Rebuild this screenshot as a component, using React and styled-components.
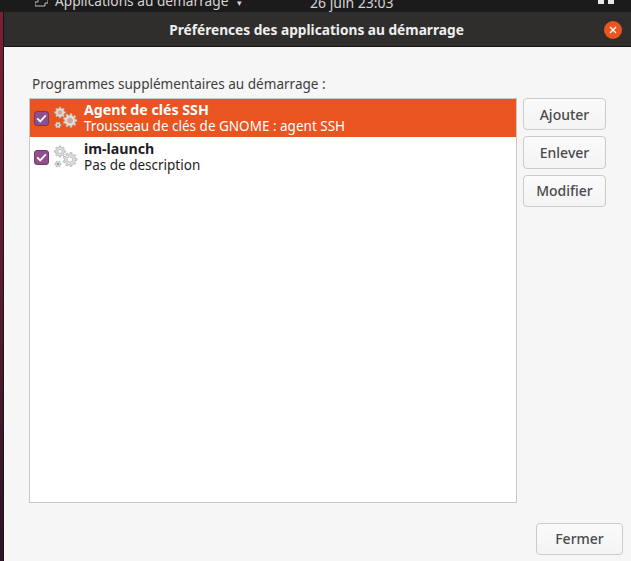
import React from "react";
import styled, { createGlobalStyle } from "styled-components";

const GlobalStyle = createGlobalStyle`
  html, body { margin: 0; padding: 0; background: #17151a; }
  body { font-family: "Noto Sans", "Open Sans", sans-serif; }
`;

const Screen = styled.div`
  width: 631px;
  height: 561px;
  display: flex;
  flex-direction: column;
  overflow: hidden;
`;

const TopBar = styled.div`
  height: 12px;
  flex: none;
  display: flex;
  align-items: flex-end;
  background: #1c1b1c;
  color: #d4d4d4;
  font-size: 13.7px;
  line-height: 18px;
  overflow: hidden;
  padding-left: 35px;
`;

const AppMenu = styled.div`
  display: flex;
  align-items: flex-end;
  gap: 7px;
  width: 275px;
  svg { margin-bottom: 5px; flex: none; }
`;

const Caret = styled.span`
  font-size: 9px;
  margin-left: 9px;
`;

const Clock = styled.div`
  width: 288px;
  font-size: 14px;
`;

const Tray = styled.div`
  display: flex;
  gap: 4px;
  margin-bottom: 8px;
  span { display: block; width: 6px; height: 4px; background: #e8e8e8; }
`;

const Desktop = styled.div`
  flex: 1;
  display: flex;
  min-height: 0;
`;

const WindowEdge = styled.div`
  width: 3px;
  flex: none;
  background: linear-gradient(#7a2133 0, #5e1b30 45%, #2a1426 100%);
  border-right: 1px solid #17151a;
`;

const Win = styled.div`
  flex: 1;
  display: flex;
  flex-direction: column;
  min-width: 0;
`;

const TitleBar = styled.header`
  height: 34px;
  flex: none;
  display: flex;
  align-items: center;
  justify-content: center;
  position: relative;
  background: #2f2e2d;
  border-bottom: 1px solid #161514;
  color: #efefef;
  font-size: 13.7px;
  font-weight: 700;
  padding-right: 2px;
`;

const CloseButton = styled.button`
  position: absolute;
  right: 9px;
  top: 9px;
  width: 18px;
  height: 18px;
  border: 0;
  border-radius: 50%;
  padding: 0;
  display: flex;
  align-items: center;
  justify-content: center;
  background: #e95420;
`;

const Body = styled.main`
  flex: 1;
  display: flex;
  flex-direction: column;
  background: #f6f6f6;
  padding: 28px 8px 6px 25px;
  min-height: 0;
`;

const Label = styled.div`
  font-size: 13.55px;
  line-height: 18px;
  color: #3d3d3d;
  margin: 0 0 5px 3px;
`;

const Columns = styled.div`
  display: flex;
  gap: 6px;
  flex: 1;
  min-height: 0;
`;

const List = styled.div`
  width: 488px;
  height: 405px;
  box-sizing: border-box;
  background: #fff;
  border: 1px solid #c9c7c4;
`;

const Row = styled.div`
  height: 38px;
  display: flex;
  align-items: center;
  padding-left: 4px;
  background: ${(p) => (p.$selected ? "#e95420" : "transparent")};
  color: ${(p) => (p.$selected ? "#fff" : "#1e1e1e")};
  & + & { margin-top: 1px; }
`;

const Check = styled.span`
  width: 13px;
  height: 13px;
  flex: none;
  border-radius: 3px;
  background: #924d8b;
  border: 1px solid #6f3b6a;
  display: flex;
  align-items: center;
  justify-content: center;
  margin-right: 5px;
`;

const RowText = styled.div`
  margin-left: 6px;
  font-size: 13.5px;
  line-height: 17px;
  white-space: nowrap;
`;

const RowName = styled.div`
  font-size: 14.2px;
  font-weight: 700;
`;

const Actions = styled.div`
  display: flex;
  flex-direction: column;
  gap: 6px;
`;

const Button = styled.button`
  width: 83px;
  height: 32.4px;
  box-sizing: border-box;
  border: 1px solid #cdcbc8;
  border-radius: 4px;
  background: linear-gradient(#fafafa, #f4f4f4);
  color: #4a4a4a;
  font: 500 14px "Noto Sans", sans-serif;
  padding: 0;
`;

const Footer = styled.div`
  display: flex;
  justify-content: flex-end;
  padding-top: 20px;
`;

const CloseAction = styled(Button)`
  width: 87px;
`;

// builds a toothed gear outline around cx,cy
const gearPath = (cx, cy, r, teeth) => {
  const inner = r * 0.76;
  const step = (Math.PI * 2) / teeth;
  let d = "";
  for (let i = 0; i < teeth; i++) {
    const a = i * step;
    const pts = [
      [inner, a - step * 0.5],
      [inner, a - step * 0.28],
      [r, a - step * 0.18],
      [r, a + step * 0.18],
      [inner, a + step * 0.28],
    ];
    pts.forEach(([rad, t], j) => {
      const x = (cx + rad * Math.cos(t)).toFixed(2);
      const y = (cy + rad * Math.sin(t)).toFixed(2);
      d += `${i === 0 && j === 0 ? "M" : "L"}${x} ${y} `;
    });
  }
  return d + "Z";
};

const Gears = ({ selected }) => {
  const fill = selected ? "#e3dedb" : "#dcdcdc";
  const stroke = selected ? "#c0aca0" : "#a8a8a8";
  const hole = selected ? "#d9a58f" : "#fff";
  return (
    <svg width="24" height="24" viewBox="0 0 24 24">
      <path d={gearPath(6, 6.5, 5.5, 8)} fill={fill} stroke={stroke} strokeWidth="0.7" />
      <circle cx="6" cy="6.5" r="2" fill={hole} stroke={stroke} strokeWidth="0.6" />
      <path d={gearPath(4, 19, 3.2, 6)} fill={fill} stroke={stroke} strokeWidth="0.6" />
      <circle cx="4" cy="19" r="1.1" fill={selected ? "#8f8078" : "#8a8a8a"} />
      <path d={gearPath(16, 14.5, 7, 9)} fill={fill} stroke={stroke} strokeWidth="0.7" />
      <circle cx="16" cy="14.5" r="2.6" fill={hole} stroke={stroke} strokeWidth="0.6" />
    </svg>
  );
};

const Tick = () => (
  <svg width="11" height="9" viewBox="0 0 11 9">
    <path d="M1.2 4.4 4.2 7.4 9.8 1.4" fill="none" stroke="#fff" strokeWidth="1.8" />
  </svg>
);

const programs = [
  { name: "Agent de clés SSH", info: "Trousseau de clés de GNOME : agent SSH", selected: true },
  { name: "im-launch", info: "Pas de description", selected: false },
];

export default function App() {
  return (
    <Screen>
      <GlobalStyle />
      <TopBar>
        <AppMenu>
          <svg width="13" height="8" viewBox="0 0 13 8">
            <path d="M3 0v3H0v4h10V4h3V0" fill="none" stroke="#bdbdbd" />
          </svg>
          <span>
            Applications au démarrage<Caret>▾</Caret>
          </span>
        </AppMenu>
        <Clock>26 juin 23:03</Clock>
        <Tray>
          <span />
          <span />
        </Tray>
      </TopBar>
      <Desktop>
        <WindowEdge />
        <Win>
          <TitleBar>
            Préférences des applications au démarrage
            <CloseButton aria-label="Fermer">
              <svg width="8" height="8" viewBox="0 0 8 8">
                <path d="M1 1l6 6M7 1 1 7" stroke="#fff" strokeWidth="1.4" />
              </svg>
            </CloseButton>
          </TitleBar>
          <Body>
            <Label>Programmes supplémentaires au démarrage :</Label>
            <Columns>
              <List>
                {programs.map((p) => (
                  <Row key={p.name} $selected={p.selected}>
                    <Check>
                      <Tick />
                    </Check>
                    <Gears selected={p.selected} />
                    <RowText>
                      <RowName>{p.name}</RowName>
                      <div>{p.info}</div>
                    </RowText>
                  </Row>
                ))}
              </List>
              <Actions>
                <Button>Ajouter</Button>
                <Button>Enlever</Button>
                <Button>Modifier</Button>
              </Actions>
            </Columns>
            <Footer>
              <CloseAction>Fermer</CloseAction>
            </Footer>
          </Body>
        </Win>
      </Desktop>
    </Screen>
  );
}
